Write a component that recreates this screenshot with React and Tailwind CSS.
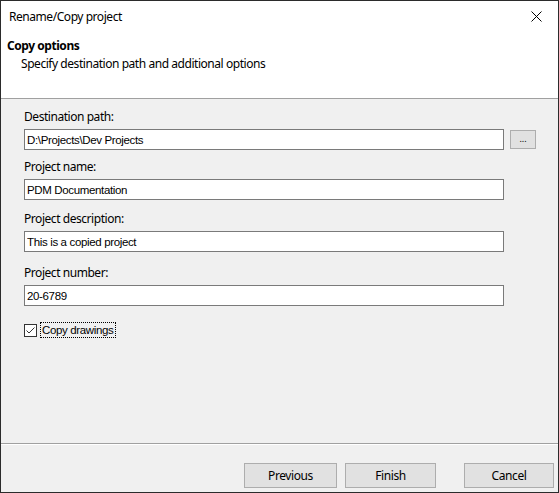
import React, { useState } from "react";

const uiFont = { fontFamily: '"Noto Sans", "Liberation Sans", sans-serif' };
const editFont = { fontFamily: '"Liberation Sans", Arial, sans-serif' };

const TextBox = ({ value }) => (
  <input
    type="text"
    defaultValue={value}
    style={editFont}
    className="h-[21px] w-[480px] border border-[#7a7a7a] bg-white px-[2px] text-[11.5px] tracking-[-0.35px] text-black outline-none"
  />
);

const Field = ({ label, value, className = "" }) => (
  <div className={`flex flex-col ${className}`}>
    <div className="h-[16px] leading-[16px]">{label}</div>
    <div className="mt-[4px]">
      <TextBox value={value} />
    </div>
  </div>
);

const Button = ({ children, className = "" }) => (
  <button
    className={`h-[25px] border border-[#adadad] bg-[#e1e1e1] text-[12px] tracking-[-0.4px] text-black ${className}`}
  >
    {children}
  </button>
);

export default function App() {
  const [copyDrawings, setCopyDrawings] = useState(true);

  return (
    <div
      className="flex h-[493px] w-[559px] flex-col border border-[#2b2b2b] bg-[#f0f0f0] text-[12px] tracking-[-0.45px] text-black"
      style={uiFont}
    >
      {/* title bar + header */}
      <div className="flex h-[97px] flex-col bg-white">
        <div className="flex h-[30px] items-center justify-between pl-[8px] pr-[16px] pt-[1px]">
          <span>Rename/Copy project</span>
          <svg width="11" height="11" viewBox="0 0 11 11">
            <path d="M0.5 0.5 L10.5 10.5 M10.5 0.5 L0.5 10.5" stroke="#000" strokeWidth="1" />
          </svg>
        </div>
        <div className="pl-[6px] pt-[7px] font-bold leading-[16px]">Copy options</div>
        <div className="pl-[20px] pt-[2px] leading-[16px]">
          Specify destination path and additional options
        </div>
      </div>
      <div className="h-px bg-[#a0a0a0]" />

      {/* body */}
      <div className="flex flex-1 flex-col pl-[23px] pt-[10px]">
        <div className="flex flex-col">
          <div className="h-[16px] leading-[16px]">Destination path:</div>
          <div className="mt-[4px] flex items-center">
            <TextBox value="D:\Projects\Dev Projects" />
            <button className="ml-[6px] flex h-[19px] w-[26px] items-start justify-center border border-[#adadad] bg-[#e1e1e1] pt-[3px] text-[9px] leading-none tracking-normal">
              ...
            </button>
          </div>
        </div>
        <Field className="mt-[9px]" label="Project name:" value="PDM Documentation" />
        <Field className="mt-[11px]" label="Project description:" value="This is a copied project" />
        <Field className="mt-[13px]" label="Project number:" value="20-6789" />
        <label className="mt-[16px] flex items-center" style={editFont}>
          <span
            onClick={() => setCopyDrawings(!copyDrawings)}
            className="flex h-[13px] w-[13px] items-center justify-center border border-[#333] bg-white"
          >
            {copyDrawings && (
              <svg width="11" height="11" viewBox="0 0 11 11">
                <path d="M1.5 5.5 L4 8 L9.5 2.5" fill="none" stroke="#333" strokeWidth="1" />
              </svg>
            )}
          </span>
          <span className="ml-[3px] border border-dotted border-black px-px text-[11.5px] leading-[14px] tracking-[-0.35px]">
            Copy drawings
          </span>
        </label>
      </div>

      {/* footer */}
      <div className="h-px bg-[#a0a0a0]" />
      <div className="h-px bg-white" />
      <div className="flex h-[47px] items-start justify-end pr-[4px] pt-[18px]">
        <Button className="w-[93px]">Previous</Button>
        <Button className="ml-[8px] w-[91px]">Finish</Button>
        <Button className="ml-[28px] w-[90px]">Cancel</Button>
      </div>
    </div>
  );
}
